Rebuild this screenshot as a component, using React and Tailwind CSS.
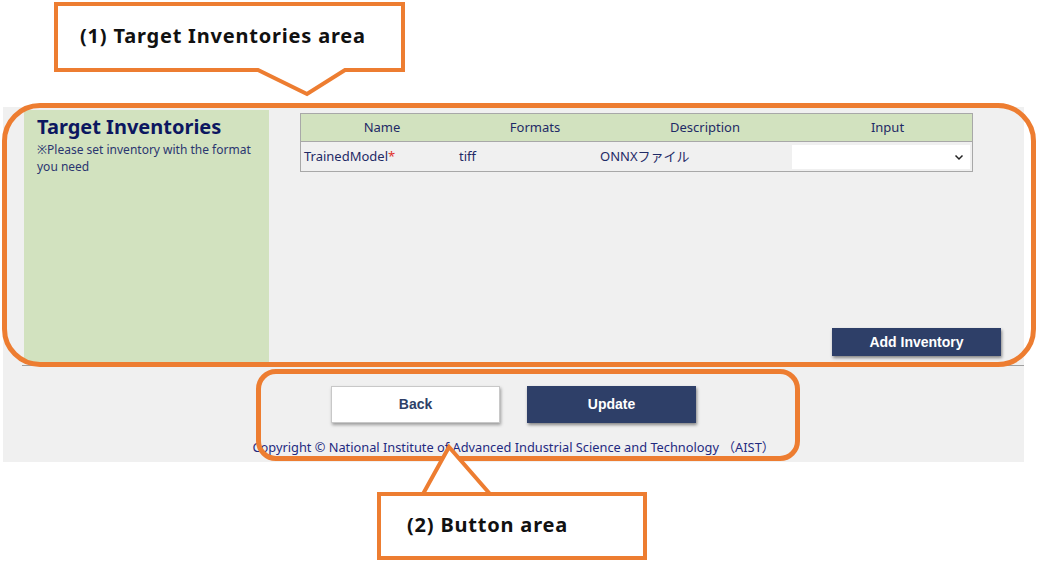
import React from "react";

const FONT = { fontFamily: '"Noto Sans", "Noto Sans CJK JP", sans-serif' };
const BTN = { fontFamily: '"Liberation Sans", Arial, sans-serif' };

function Callout({ box, label, textClass }) {
  return (
    <>
      <svg className="absolute inset-0 pointer-events-none" width="1038" height="564">
        <path d={box} fill="white" stroke="#ed7d31" strokeWidth="4" strokeLinejoin="miter" />
      </svg>
      <div className={`absolute font-bold tracking-[0.8px] text-[#111] ${textClass}`}>{label}</div>
    </>
  );
}

export default function App() {
  const columns = [
    { label: "Name", width: "w-[162px]" },
    { label: "Formats", width: "w-[144px]" },
    { label: "Description", width: "w-[196px]" },
    { label: "Input", width: "flex-1" },
  ];

  return (
    <div className="relative h-[564px] w-[1038px] overflow-hidden bg-white" style={FONT}>
      {/* screenshot of the page */}
      <div className="absolute left-[3px] top-[107px] flex h-[355px] w-[1021px] flex-col bg-[#f0f0f0]">
        <div className="ml-[19px] flex h-[259px] border-b border-[#a0a0a0] pt-[3px]">
          <div className="ml-[2px] h-[252px] w-[245px] bg-[#d2e2bf] px-[13px] pt-[4px]">
            <h2 className="text-[20px] font-bold leading-[26px] text-[#0c1760]">Target Inventories</h2>
            <p className="mt-[1px] text-[12px] leading-[17px] text-[#2b3670]">
              ※Please set inventory with the format you need
            </p>
          </div>
          <div className="flex flex-1 flex-col pl-[31px] pr-[23px] pt-[3px]">
            <div className="w-[673px] border border-[#a8a8a8]">
              <div className="flex h-[28px] items-center border-b border-[#a8a8a8] bg-[#d2e2bf] text-[13px] text-[#1f2a66]">
                {columns.map((c) => (
                  <div key={c.label} className={`${c.width} text-center`}>
                    {c.label}
                  </div>
                ))}
              </div>
              <div className="flex h-[29px] items-center text-[13px] text-[#1f2a66]">
                <div className="w-[158px] pl-[3px]">
                  TrainedModel<span className="text-[#e0302a]">*</span>
                </div>
                <div className="w-[141px]">tiff</div>
                <div className="w-[192px]">ONNXファイル</div>
                <div className="flex h-[24px] w-[178px] items-center justify-end bg-white pr-[6px]">
                  <svg width="10" height="10" viewBox="0 0 10 10">
                    <path d="M1.5 3.5 L5 7 L8.5 3.5" fill="none" stroke="#222" strokeWidth="1.5" />
                  </svg>
                </div>
              </div>
            </div>
            <div className="mt-auto mb-[9px] flex justify-end">
              <button
                className="h-[28px] w-[169px] bg-[#2e3f68] text-[14px] font-bold text-white shadow-[1px_2px_3px_rgba(0,0,0,0.45)]"
                style={BTN}
              >
                Add Inventory
              </button>
            </div>
          </div>
        </div>

        <div className="mt-[20px] flex justify-center gap-[27px]" style={BTN}>
          <button className="h-[37px] w-[169px] border border-[#c8c8c8] bg-white text-[14px] font-bold text-[#2e3f68] shadow-[1px_2px_3px_rgba(0,0,0,0.35)]">
            Back
          </button>
          <button className="h-[37px] w-[169px] bg-[#2e3f68] text-[14px] font-bold text-white shadow-[1px_2px_3px_rgba(0,0,0,0.45)]">
            Update
          </button>
        </div>
        <p className="mt-[15px] text-center text-[12.8px] text-[#1f2a80]">
          Copyright © National Institute of Advanced Industrial Science and Technology （AIST）
        </p>
      </div>

      {/* annotation frames */}
      <div className="absolute left-[2px] top-[103px] h-[264px] w-[1034px] rounded-[38px] border-[5px] border-[#ed7d31]" />
      <div className="absolute left-[256px] top-[369px] h-[92px] w-[544px] rounded-[20px] border-[5px] border-[#ed7d31]" />

      <Callout
        box="M56 4 H403 V70 H345 L307 94 L258 70 H56 Z"
        label="(1) Target Inventories area"
        textClass="left-[80px] top-[22px] text-[20px] leading-[28px]"
      />
      <Callout
        box="M379 494 H645 V558 H379 Z M379 494 H423 L449 447 L490 494"
        label="(2) Button area"
        textClass="left-[407px] top-[511px] text-[20px] leading-[28px]"
      />
    </div>
  );
}
